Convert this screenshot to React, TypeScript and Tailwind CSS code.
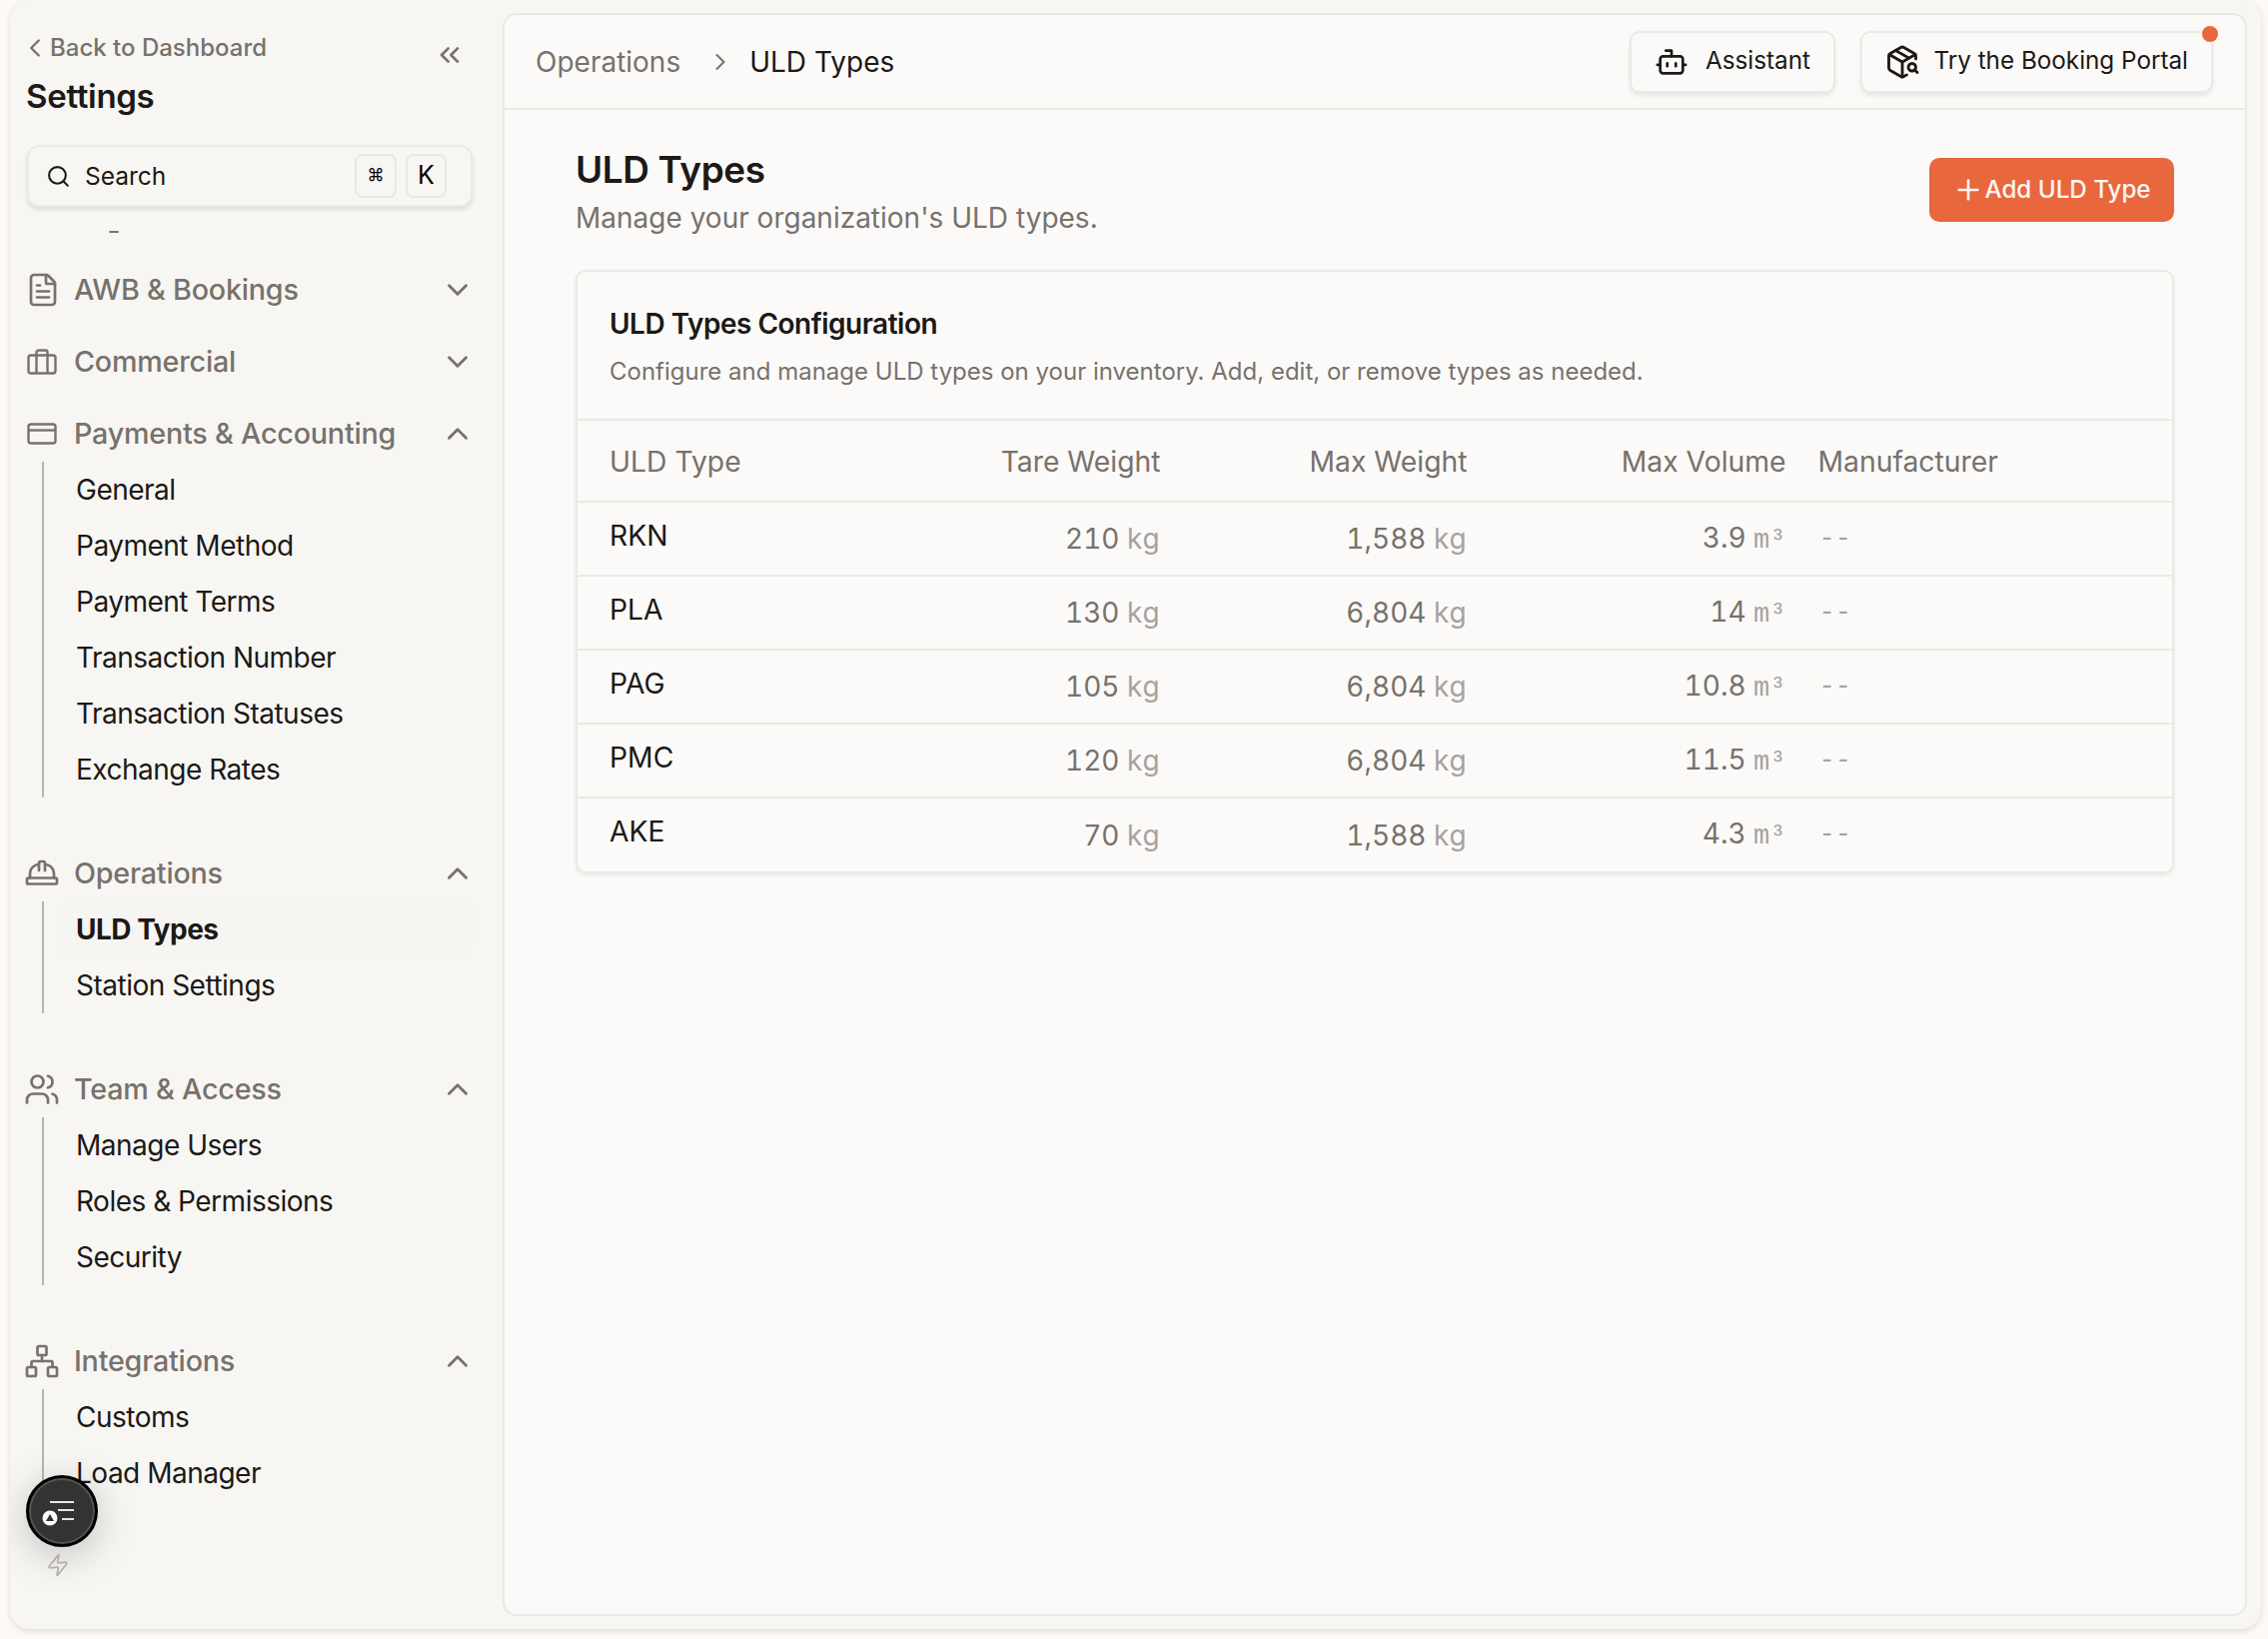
import { Bot, ChevronDown, ChevronLeft, ChevronRight, ChevronUp, ChevronsLeft, FileText, HardHat, Network, PackageSearch, Plus, Search, Users, Zap } from "lucide-react";
import type { ReactNode } from "react";

const rows = [
  { name: "RKN", tare: "210", max: "1,588", volume: "3.9" },
  { name: "PLA", tare: "130", max: "6,804", volume: "14" },
  { name: "PAG", tare: "105", max: "6,804", volume: "10.8" },
  { name: "PMC", tare: "120", max: "6,804", volume: "11.5" },
  { name: "AKE", tare: "70", max: "1,588", volume: "4.3" },
];

function SuitcaseIcon() {
  return (
    <svg viewBox="0 0 30 26" className="h-[26px] w-[30px]" fill="none" stroke="currentColor" strokeWidth="2.4" strokeLinejoin="round">
      <rect x="1.5" y="6.5" width="27" height="18" rx="2.5" />
      <path d="M9.5 6.5V24.5M20.5 6.5V24.5M9.5 6.5V3.5a2 2 0 0 1 2-2h7a2 2 0 0 1 2 2v3" />
    </svg>
  );
}

function CardIcon() {
  return (
    <svg viewBox="0 0 30 22" className="h-[22px] w-[30px]" fill="none" stroke="currentColor" strokeWidth="2.4">
      <rect x="1.5" y="1.5" width="27" height="19" rx="2.5" />
      <path d="M1.5 7.5H28.5" />
    </svg>
  );
}

function NavSection({ icon, label, open, items = [] }: { icon: ReactNode; label: string; open?: boolean; items?: string[] }) {
  return (
    <div className={open ? "mb-[48px]" : "mb-[16px]"}>
      <div className="flex h-[56px] items-center pl-[17px] pr-[28px] text-[#78716c]">
        <div className="flex w-[47px] shrink-0 items-center">{icon}</div>
        <span className="flex-1 text-[28.7px] font-medium tracking-[-0.2px]">{label}</span>
        {open ? <ChevronUp className="h-[34px] w-[34px]" strokeWidth={2} /> : <ChevronDown className="h-[34px] w-[34px]" strokeWidth={2} />}
      </div>
      {open && (
        <div className="ml-[32px] mr-[30px] border-l-2 border-[#b8b5ae]">
          {items.map((item) => {
            const active = item === "ULD Types";
            return (
              <div key={item} className={`ml-[15px] flex h-[56px] items-center rounded-[8px] pl-[17px] text-[28px] tracking-[-0.5px] text-[#1c1917] ${active ? "bg-[#f6f5f2] font-bold" : ""}`}>
                {item}
              </div>
            );
          })}
        </div>
      )}
    </div>
  );
}

function Sidebar() {
  return (
    <aside className="relative flex h-full w-[493px] shrink-0 flex-col overflow-hidden">
      <div className="flex justify-between pl-[16px] pr-[37px] pt-[30px]">
        <div>
          <div className="flex items-center text-[#78716c]">
            <ChevronLeft className="ml-[-6px] h-[30px] w-[30px]" strokeWidth={1.9} />
            <span className="text-[24px] font-medium">Back to Dashboard</span>
          </div>
          <h2 className="mt-[10px] text-[33px] font-semibold leading-[40px] tracking-[-0.3px] text-[#1c1917]">Settings</h2>
        </div>
        <ChevronsLeft className="mt-[9px] h-[32px] w-[32px] text-[#78716c]" strokeWidth={2} />
      </div>

      <div className="ml-[17px] mr-[30px] mt-[29px] flex h-[62px] items-center rounded-[12px] border-2 border-[#ebe9e5] bg-[#f7f6f3] pl-[17px] pr-[24px] shadow-[0_3px_4px_rgba(0,0,0,0.1)]">
        <Search className="h-[25px] w-[25px] text-[#1c1917]" strokeWidth={2} />
        <span className="ml-[14px] flex-1 text-[24.5px] text-[#1c1917]">Search</span>
        <kbd className="flex h-[44px] w-[42px] items-center justify-center rounded-[8px] border-2 border-[#e9e7e3] font-['Inter'] text-[17px]">⌘</kbd>
        <kbd className="ml-[9px] flex h-[44px] w-[41px] items-center justify-center rounded-[8px] border-2 border-[#e9e7e3] font-['Inter'] text-[25px]">K</kbd>
      </div>

      <div className="min-h-0 flex-1 overflow-hidden">
        <div className="ml-[99px] mt-[24px] h-[2px] w-[10px] rounded-full bg-[#78716c]" />
        <div className="mt-[29px]">
          <NavSection icon={<FileText className="ml-[-2px] h-[36px] w-[36px] shrink-0" strokeWidth={1.8} />} label="AWB & Bookings" />
          <NavSection icon={<SuitcaseIcon />} label="Commercial" />
          <NavSection icon={<CardIcon />} label="Payments & Accounting" open items={["General", "Payment Method", "Payment Terms", "Transaction Number", "Transaction Statuses", "Exchange Rates"]} />
          <NavSection icon={<HardHat className="ml-[-3px] h-[36px] w-[36px] shrink-0" strokeWidth={1.8} />} label="Operations" open items={["ULD Types", "Station Settings"]} />
          <NavSection icon={<Users className="ml-[-3px] h-[36px] w-[36px] shrink-0" strokeWidth={1.8} />} label="Team & Access" open items={["Manage Users", "Roles & Permissions", "Security"]} />
          <NavSection icon={<Network className="ml-[-3px] h-[36px] w-[36px] shrink-0" strokeWidth={1.8} />} label="Integrations" open items={["Customs", "Load Manager"]} />
        </div>
      </div>

      <div className="absolute left-[16px] top-[1476px] flex h-[72px] w-[72px] items-center justify-center rounded-full border-[3px] border-black bg-[#333331] shadow-[0_8px_40px_rgba(0,0,0,0.22),inset_0_0_0_2px_#555553]">
        <svg viewBox="0 0 40 30" className="h-[30px] w-[40px]">
          <path d="M8 6H32M16 14H32M20 23H32" stroke="#e7e5e2" strokeWidth="2" fill="none" />
          <circle cx="8" cy="22" r="7.5" fill="#fff" />
          <path d="M8 18L12 25H4Z" fill="#333331" />
        </svg>
      </div>
      <Zap className="absolute left-[36px] top-[1554px] h-[24px] w-[24px] -rotate-6 text-[#b5b2ac]" strokeWidth={1.8} />
    </aside>
  );
}

function HeaderButton({ icon, label }: { icon: ReactNode; label: string }) {
  return (
    <button className="flex h-[62px] items-center rounded-[10px] border-2 border-[#ebe9e5] bg-[#fbfaf8] pr-[23px] text-[24.25px] text-[#1c1917] shadow-[0_3px_4px_rgba(0,0,0,0.08)]">
      {icon}
      <span>{label}</span>
    </button>
  );
}

function Main() {
  return (
    <main className="mb-[13px] mt-[13px] flex flex-1 flex-col rounded-[14px] border-2 border-[#ebe9e5] bg-[#fbfaf8]">
      <header className="flex h-[95px] shrink-0 items-center border-b-2 border-[#ebe9e5] pl-[31px] pr-[32px]">
        <span className="text-[28px] text-[#78716c]">Operations</span>
        <ChevronRight className="ml-[26px] h-[28px] w-[28px] text-[#78716c]" strokeWidth={1.8} />
        <span className="ml-[15px] flex-1 text-[28px] text-[#1c1917]">ULD Types</span>
        <div className="relative flex gap-[25px]">
          <HeaderButton icon={<Bot className="ml-[22.5px] mr-[17px] h-[34px] w-[34px]" strokeWidth={1.9} />} label="Assistant" />
          <div className="relative">
            <HeaderButton icon={<PackageSearch className="ml-[22.5px] mr-[13px] h-[36px] w-[36px]" strokeWidth={1.9} />} label="Try the Booking Portal" />
            <span className="absolute right-[-5px] top-[-5px] h-[16px] w-[16px] rounded-full bg-[#e9673d]" />
          </div>
        </div>
      </header>

      <div className="px-[71px] pt-[38px]">
        <div className="flex items-start justify-between">
          <div>
            <h1 className="text-[37px] font-semibold leading-[44px] tracking-[-0.4px] text-[#1c1917]">ULD Types</h1>
            <p className="mt-[8px] text-[28px] leading-[36px] text-[#78716c]">Manage your organization's ULD types.</p>
          </div>
          <button className="mt-[10px] flex h-[64px] w-[245px] items-center justify-center rounded-[10px] bg-[#e9673d] text-[24.2px] font-medium text-[#fdf6f2]">
            <Plus className="h-[32px] w-[32px]" strokeWidth={2} />
            Add ULD Type
          </button>
        </div>

        <section className="mt-[34px] overflow-hidden rounded-[10px] border-2 border-[#ebe9e5] shadow-[0_2px_4px_rgba(0,0,0,0.08)]">
          <div className="h-[149px] border-b-2 border-[#ebe9e5] px-[32px] pt-[34px]">
            <h3 className="text-[28px] font-semibold leading-[36px] tracking-[-0.5px] text-[#1c1917]">ULD Types Configuration</h3>
            <p className="mt-[12px] text-[24px] leading-[36px] text-[#78716c]">Configure and manage ULD types on your inventory. Add, edit, or remove types as needed.</p>
          </div>
          <table className="w-full table-fixed border-collapse">
            <colgroup>
              <col className="w-[300px]" />
              <col className="w-[283.5px]" />
              <col className="w-[307px]" />
              <col className="w-[319px]" />
              <col />
            </colgroup>
            <thead>
              <tr className="h-[81px] border-b-2 border-[#ebe9e5] text-[28.3px] text-[#78716c]">
                <th className="pl-[32px] pt-[2px] text-left font-normal">ULD Type</th>
                <th className="pt-[2px] text-right font-normal">Tare Weight</th>
                <th className="pt-[2px] text-right font-normal">Max Weight</th>
                <th className="pt-[2px] text-right font-normal">Max Volume</th>
                <th className="pl-[32px] pt-[2px] text-left font-normal">Manufacturer</th>
              </tr>
            </thead>
            <tbody>
              {rows.map((row, i) => (
                <tr key={row.name} className={`h-[74px] ${i < rows.length - 1 ? "border-b-2 border-[#ebe9e5]" : ""}`}>
                  <td className="pb-[6px] pl-[32px] text-[28.3px] text-[#1c1917]">{row.name}</td>
                  <td className="text-right"><Measure value={row.tare} unit="kg" /></td>
                  <td className="text-right"><Measure value={row.max} unit="kg" /></td>
                  <td className="text-right"><Measure value={row.volume} unit="m³" mono /></td>
                  <td className="pl-[33px] font-['Liberation_Mono',monospace] text-[27px] text-[#a8a29e]">--</td>
                </tr>
              ))}
            </tbody>
          </table>
        </section>
      </div>
    </main>
  );
}

function Measure({ value, unit, mono }: { value: string; unit: string; mono?: boolean }) {
  return (
    <span className="text-[28px] tabular-nums text-[#78716c]">
      {value} <span className={mono ? "font-['Liberation_Mono',monospace] text-[27px] text-[#a8a29e]" : "tracking-[0.8px] text-[#a8a29e]"}>{unit}</span>
    </span>
  );
}

export default function App() {
  return (
    <div className="h-[1640px] w-[2270px] overflow-hidden bg-[#fdf9f7] pr-[7px] font-['Inter',sans-serif]">
      <div className="ml-[10px] flex h-[1630px] overflow-hidden rounded-b-[20px] rounded-t-[20px] bg-[#f7f6f3] pr-[14px] shadow-[0_2px_6px_rgba(0,0,0,0.12)]">
        <Sidebar />
        <Main />
      </div>
    </div>
  );
}
